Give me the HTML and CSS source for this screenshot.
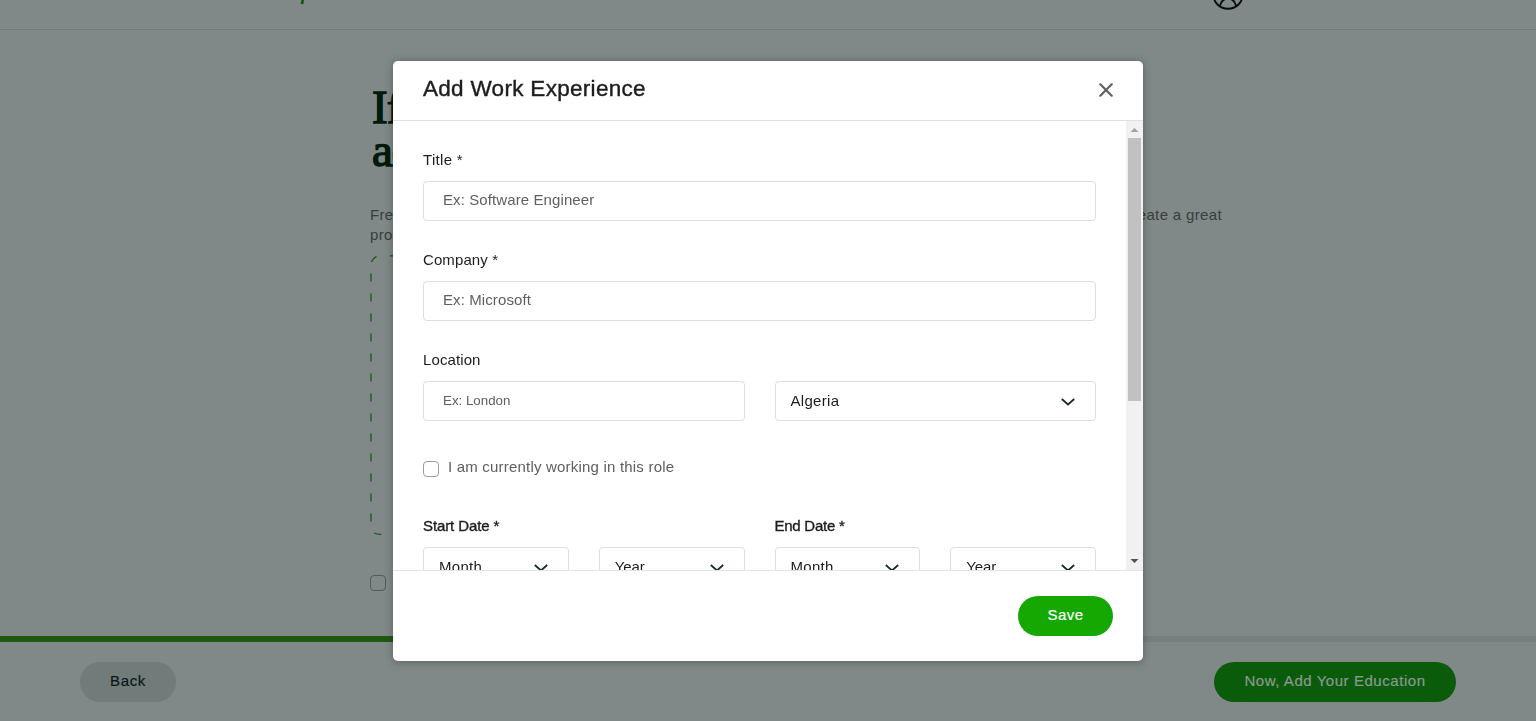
FILE: index.html
```html
<!DOCTYPE html>
<html lang="en">
<head>
<meta charset="utf-8">
<title>Add Work Experience</title>
<link rel="stylesheet" href="styles.css">
</head>
<body>
<div class="page">
  <header class="topbar">
    <svg class="brand" width="12" height="6" viewBox="0 0 12 6"><path d="M4.800 0 4 4" stroke="#0b5c0b" stroke-width="2.700" fill="none"/></svg>
    <svg class="avatar" width="32" height="12" viewBox="0 0 32 12"><g fill="none" stroke="#070b0b" stroke-width="1.900"><circle cx="16" cy="-6" r="14.800"/><path d="M7.800 6C9 2 11.500 -1.500 16 -1.500S23 2 24.200 6"/></g></svg>
  </header>
  <main class="content">
    <h1 class="headline">If you have<br>add it here.</h1>
    <div class="intro">
      <p class="intro-first"><span>Freelancers who add their experience are twice as likely to win work.</span><span>You can still create a great</span></p>
      <p>profile.</p>
    </div>
    <svg class="dropzone" width="852" height="280" viewBox="0 0 852 280"><g fill="none" stroke="#19591d" stroke-width="1.300"><path d="M1 18.500V270" stroke-dasharray="8 12"/><path d="M1.300 7Q3 3 6.500 1.300M20 .8h10M4 278q3 1.500 7.500 1.300"/></g></svg>
    <span class="check check-dim"></span>
  </main>
  <div class="progress"><div class="progress-value"></div></div>
  <footer class="actions">
    <button class="btn btn-back">Back</button>
    <button class="btn btn-next">Now, Add Your Education</button>
  </footer>
</div>

<section class="modal" role="dialog">
  <header class="modal-head">
    <h2 class="modal-title">Add Work Experience</h2>
    <svg class="close" width="14" height="14" viewBox="0 0 14 14"><path d="M1.300 1.300 12.700 12.700M12.700 1.300 1.300 12.700" stroke="#5e6060" stroke-width="2.200" fill="none" stroke-linecap="round"/></svg>
  </header>
  <div class="modal-body">
    <div class="form">
      <div class="field"><span class="label wide">Title *</span><div class="input">Ex: Software Engineer</div></div>
      <div class="field"><span class="label">Company *</span><div class="input">Ex: Microsoft</div></div>
      <div class="field"><span class="label">Location</span>
        <div class="pair">
          <div class="input input-small">Ex: London</div>
          <div class="select">Algeria<svg class="chevron" width="14" height="8" viewBox="0 0 14 8"><path d="M.8 1 7 6.500 13.200 1"/></svg></div>
        </div>
      </div>
      <div class="role"><span class="check"></span><span class="role-text">I am currently working in this role</span></div>
      <div class="pair">
        <div class="date"><span class="label strong">Start Date *</span>
          <div class="pair">
            <div class="select">Month<svg class="chevron" width="14" height="8" viewBox="0 0 14 8"><path d="M.8 1 7 6.500 13.200 1"/></svg></div>
            <div class="select year">Year<svg class="chevron" width="14" height="8" viewBox="0 0 14 8"><path d="M.8 1 7 6.500 13.200 1"/></svg></div>
          </div>
        </div>
        <div class="date"><span class="label strong tight">End Date *</span>
          <div class="pair">
            <div class="select">Month<svg class="chevron" width="14" height="8" viewBox="0 0 14 8"><path d="M.8 1 7 6.500 13.200 1"/></svg></div>
            <div class="select year">Year<svg class="chevron" width="14" height="8" viewBox="0 0 14 8"><path d="M.8 1 7 6.500 13.200 1"/></svg></div>
          </div>
        </div>
      </div>
    </div>
    <div class="scrollbar">
      <svg class="arrow" width="17" height="17" viewBox="0 0 17 17"><path d="M4.500 11 8.500 7l4 4z" fill="#a3a3a3"/></svg>
      <div class="thumb"></div>
      <svg class="arrow arrow-down" width="17" height="17" viewBox="0 0 17 17"><path d="M4.500 6 8.500 10l4-4z" fill="#505050"/></svg>
    </div>
  </div>
  <footer class="modal-foot"><button class="btn btn-save">Save</button></footer>
</section>
</body>
</html>
```
FILE: styles.css
```css
* { box-sizing: border-box; }
body {
  margin: 0;
  height: 721px;
  overflow: hidden;
  font: 15px/20px "Liberation Sans", Arial, sans-serif;
  background: #808888;
}
h1, h2, p { margin: 0; }
svg { display: block; flex: none; }

.page { height: 721px; display: flex; flex-direction: column; }
.topbar {
  height: 30px;
  flex: none;
  display: flex;
  justify-content: space-between;
  align-items: flex-start;
  padding: 0 292px 0 298px;
  border-bottom: 1px solid #727a7a;
}
.content { flex: 1; padding: 56px 314px 0 370px; }
.headline {
  padding-left: 2px;
  font: 400 47px/43px "Liberation Serif", "Times New Roman", serif;
  -webkit-text-stroke: 1.4px currentColor;
  letter-spacing: -1px;
  color: #001a0b;
  white-space: nowrap;
}
.intro { width: 852px; margin-top: 33px; color: #363f3d; letter-spacing: .35px; }
.intro-first { display: flex; justify-content: space-between; white-space: nowrap; }
.dropzone { margin-top: 10px; }
.check {
  display: block;
  flex: none;
  width: 16px;
  height: 16px;
  border: 1px solid #9a9c9c;
  border-radius: 4px;
}
.check-dim { margin-top: 40px; border-color: #535b5b; }
.progress { height: 6px; flex: none; background: #767e7e; }
.progress-value { width: 50%; height: 6px; background: #1d5a0d; }
.actions {
  height: 79px;
  flex: none;
  display: flex;
  justify-content: space-between;
  padding: 20px 80px 0;
}
.btn {
  height: 40px;
  border: 0;
  border-radius: 20px;
  padding: 0 0 3px;
  font: inherit;
  -webkit-text-stroke: .2px currentColor;
}
.btn-back { width: 96px; background: #717b79; color: #0b1718; letter-spacing: .7px; }
.btn-next { width: 242px; background: #0a5c0a; color: #8a9891; letter-spacing: .55px; }
.btn-save { width: 95px; background: #14a800; color: #fff; letter-spacing: .4px; }

.modal {
  position: fixed;
  left: 393px;
  top: 61px;
  width: 750px;
  height: 600px;
  display: flex;
  flex-direction: column;
  background: #fff;
  border-radius: 5px;
  box-shadow: 0 1px 8px rgba(0, 0, 0, .3);
}
.modal-head {
  height: 60px;
  flex: none;
  display: flex;
  justify-content: space-between;
  padding: 14px 30px 0;
  border-bottom: 1px solid #dfe1e1;
}
.modal-title {
  font-size: 22.5px;
  line-height: 28px;
  font-weight: 400;
  letter-spacing: .3px;
  color: #1c1e1e;
  -webkit-text-stroke: .4px currentColor;
}
.close { margin-top: 8px; }
.modal-body { height: 449px; flex: none; display: flex; overflow: hidden; }
.form { width: 733px; padding: 30px 30px 0; }
.field { height: 100px; }
.label { display: block; height: 30px; line-height: 18px; color: #1c1e1e; letter-spacing: .1px; }
.wide { letter-spacing: .3px; }
.strong { -webkit-text-stroke: .35px currentColor; letter-spacing: -.1px; }
.tight { letter-spacing: -.25px; }
.input, .select {
  height: 40px;
  border: 1px solid #dcdfdf;
  border-radius: 4px;
  line-height: 35px;
}
.input { padding: 0 19px; color: #5e6060; letter-spacing: .1px; }
.input-small { font-size: 13.33px; letter-spacing: 0; line-height: 38px; }
.select {
  display: flex;
  justify-content: space-between;
  padding: 0 20px 0 15px;
  color: #1c1e1e;
  letter-spacing: .3px;
  line-height: 37px;
}
.year { letter-spacing: -.1px; }
.chevron { margin-top: 16px; fill: none; stroke: #1c2c20; stroke-width: 1.8; }
.pair { display: grid; grid-template-columns: 1fr 1fr; gap: 30px; }
.role { display: flex; gap: 9px; height: 65px; padding-top: 9px; }
.role .check { margin-top: 1px; }
.role-text { line-height: 14px; color: #5e6060; letter-spacing: .2px; }
.date .label { height: 31px; line-height: 19px; }
.scrollbar { width: 17px; background: #f1f1f1; display: flex; flex-direction: column; }
.thumb { width: 13px; height: 263px; margin-left: 2px; background: #c1c1c1; }
.arrow-down { margin-top: auto; }
.modal-foot {
  flex: 1;
  display: flex;
  justify-content: flex-end;
  padding: 25px 30px 0;
  border-top: 1px solid #e3e5e5;
}
```
